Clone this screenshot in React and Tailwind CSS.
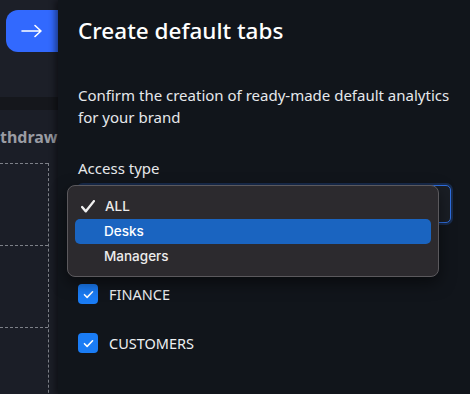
import React from "react";

export default function App() {
  return (
    <div className="flex w-[470px] h-[394px] overflow-hidden bg-[#1b1e27]" style={{ fontFamily: '"Noto Sans", sans-serif' }}>
      {/* left background */}
      <div className="w-[58px] shrink-0 flex flex-col overflow-hidden">
        <div className="h-[97px] shrink-0 bg-[#1c1f28] pt-[10px] pl-[6px]">
          <div className="w-[70px] h-[42px] rounded-[12px] bg-[#3269fe] flex items-center pl-[15px]">
            <svg width="22" height="14" viewBox="0 0 22 14" fill="none" stroke="white" strokeWidth="1.6" strokeLinecap="round" strokeLinejoin="round">
              <path d="M1 7h19M14 1.5L20 7l-6 5.5" />
            </svg>
          </div>
        </div>
        <div className="h-[13px] shrink-0 bg-[#15171c]" />
        <div className="flex-1 min-h-0 bg-[#1b1e27] pt-[16px]">
          <div className="whitespace-nowrap text-[16px] font-bold text-[#9a9ca3] leading-[22px]">thdrawals</div>
          <div className="mt-[15px] w-[49px] border-r border-dashed border-[#7d8088] h-[260px]">
            <div className="h-[82px] border-t border-dashed border-[#7d8088]" />
            <div className="h-[82px] border-t border-dashed border-[#7d8088]" />
            <div className="h-[82px] border-t border-dashed border-[#7d8088]" />
          </div>
        </div>
      </div>

      {/* panel */}
      <div className="relative flex-1 bg-[#11151b] shadow-[-3px_0_6px_rgba(0,0,0,0.45)] pl-[20px] pt-[16px]">
        <h1 className="text-[22.5px] font-medium text-white leading-[30px]">Create default tabs</h1>
        <p className="mt-[38px] text-[15px] leading-[22px] text-[#e6e8eb]">
          Confirm the creation of ready-made default analytics<br />for your brand
        </p>
        <div className="mt-[29px] text-[15px] leading-[22px] text-[#e6e8eb]">Access type</div>
        <div className="mt-[6px] mr-[19px] h-[38px] rounded-[5px] border border-[#2f6fe0] shadow-[0_0_0_2px_rgba(47,111,224,0.25)] bg-[#1a1e25]" />
        <div className="mt-[60px] flex items-center gap-[11px]">
          <span className="w-[20px] h-[20px] rounded-[4px] bg-[#1a7cf5] flex items-center justify-center">
            <svg width="11" height="9" viewBox="0 0 12 10" fill="none" stroke="white" strokeWidth="1.7" strokeLinecap="round" strokeLinejoin="round"><path d="M1.5 5.2l3 3L10.5 2" /></svg>
          </span>
          <span className="text-[14.5px] text-[#eef0f2] leading-[22px]">FINANCE</span>
        </div>
        <div className="mt-[27px] flex items-center gap-[11px]">
          <span className="w-[20px] h-[20px] rounded-[4px] bg-[#1a7cf5] flex items-center justify-center">
            <svg width="11" height="9" viewBox="0 0 12 10" fill="none" stroke="white" strokeWidth="1.7" strokeLinecap="round" strokeLinejoin="round"><path d="M1.5 5.2l3 3L10.5 2" /></svg>
          </span>
          <span className="text-[14.5px] text-[#eef0f2] leading-[22px]">CUSTOMERS</span>
        </div>

        {/* native-like dropdown */}
        <div className="absolute left-[9px] top-[185px] w-[372px] h-[92px] rounded-[8px] border border-[#5b595d] bg-[#2c2a2e] shadow-[0_6px_16px_rgba(0,0,0,0.5)] px-[7px] pt-[8px]" style={{ fontFamily: 'Inter, sans-serif' }}>
          <div className="h-[25px] flex items-center text-[13.5px] font-medium text-[#ececec]">
            <svg className="ml-[6px] mr-[10px]" width="14" height="13" viewBox="0 0 13 12" fill="none" stroke="#f0f0f0" strokeWidth="2.2" strokeLinecap="round" strokeLinejoin="round"><path d="M1 6.5l3.5 4L12 1" /></svg>
            ALL
          </div>
          <div className="h-[25px] flex items-center rounded-[5px] bg-[#1a64c0] pl-[29px] text-[13.5px] font-medium text-white">Desks</div>
          <div className="h-[25px] flex items-center pl-[29px] text-[13.5px] font-medium text-[#ececec]">Managers</div>
        </div>
      </div>
    </div>
  );
}
